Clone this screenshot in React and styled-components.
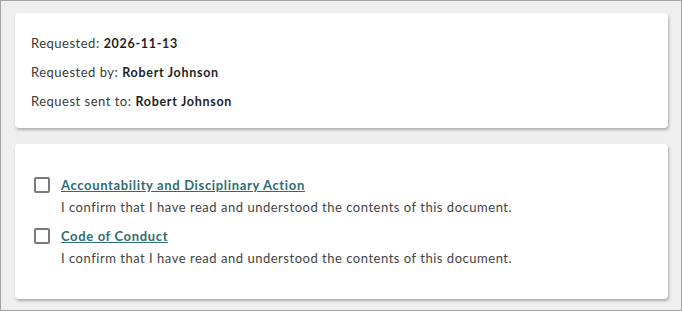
import React from 'react';
import styled, { createGlobalStyle } from 'styled-components';

const GlobalStyle = createGlobalStyle`
  html, body {
    margin: 0;
    padding: 0;
  }
  body {
    font-family: Lato, "Open Sans", sans-serif;
    background: #efefef;
  }
`;

const Page = styled.div`
  box-sizing: border-box;
  width: 682px;
  height: 311px;
  border: 1px solid #a3a3a3;
  background: #efefef;
  padding: 12px 13px 0 14px;
  display: flex;
  flex-direction: column;
  gap: 16px;
`;

const Card = styled.section`
  background: #fff;
  border-radius: 4px;
  box-shadow: 1px 2px 3px rgba(0, 0, 0, 0.28);
  padding: ${(p) => p.$pad};
`;

const InfoLine = styled.div`
  font-size: 13px;
  line-height: 29px;
  color: #3a3a3a;
  letter-spacing: 0.5px;
`;

const Value = styled.span`
  font-weight: 700;
  color: #1f1f1f;
  font-size: 12.5px;
  margin-left: 4px;
  letter-spacing: 0.7px;
`;

const List = styled.div`
  display: flex;
  flex-direction: column;
  gap: 9px;
  padding-left: 3px;
`;

const Item = styled.div`
  display: grid;
  grid-template-columns: 16px 1fr;
  column-gap: 11px;
`;

const Box = styled.span`
  box-sizing: border-box;
  width: 16px;
  height: 16px;
  margin-top: 2px;
  border: 2px solid #7a7a7a;
  border-radius: 2px;
  background: #fff;
`;

const DocLink = styled.a`
  justify-self: start;
  font-size: 13px;
  line-height: 20px;
  font-weight: 700;
  color: #2f6c72;
  text-decoration: underline;
  letter-spacing: 0.65px;
`;

const Note = styled.div`
  grid-column: 2;
  margin-top: 2px;
  font-size: 13px;
  line-height: 20px;
  color: #444;
  letter-spacing: 0.52px;
`;

const docs = ['Accountability and Disciplinary Action', 'Code of Conduct'];

export default function App() {
  return (
    <>
      <GlobalStyle />
      <Page>
        <Card $pad="16px 16px 12px">
          <InfoLine>
            Requested:<Value>2026-11-13</Value>
          </InfoLine>
          <InfoLine>
            Requested by:<Value>Robert Johnson</Value>
          </InfoLine>
          <InfoLine>
            Request sent to:<Value>Robert Johnson</Value>
          </InfoLine>
        </Card>
        <Card $pad="31px 16px 31px">
          <List>
            {docs.map((d) => (
              <Item key={d}>
                <Box />
                <DocLink href="#">{d}</DocLink>
                <Note>I confirm that I have read and understood the contents of this document.</Note>
              </Item>
            ))}
          </List>
        </Card>
      </Page>
    </>
  );
}
